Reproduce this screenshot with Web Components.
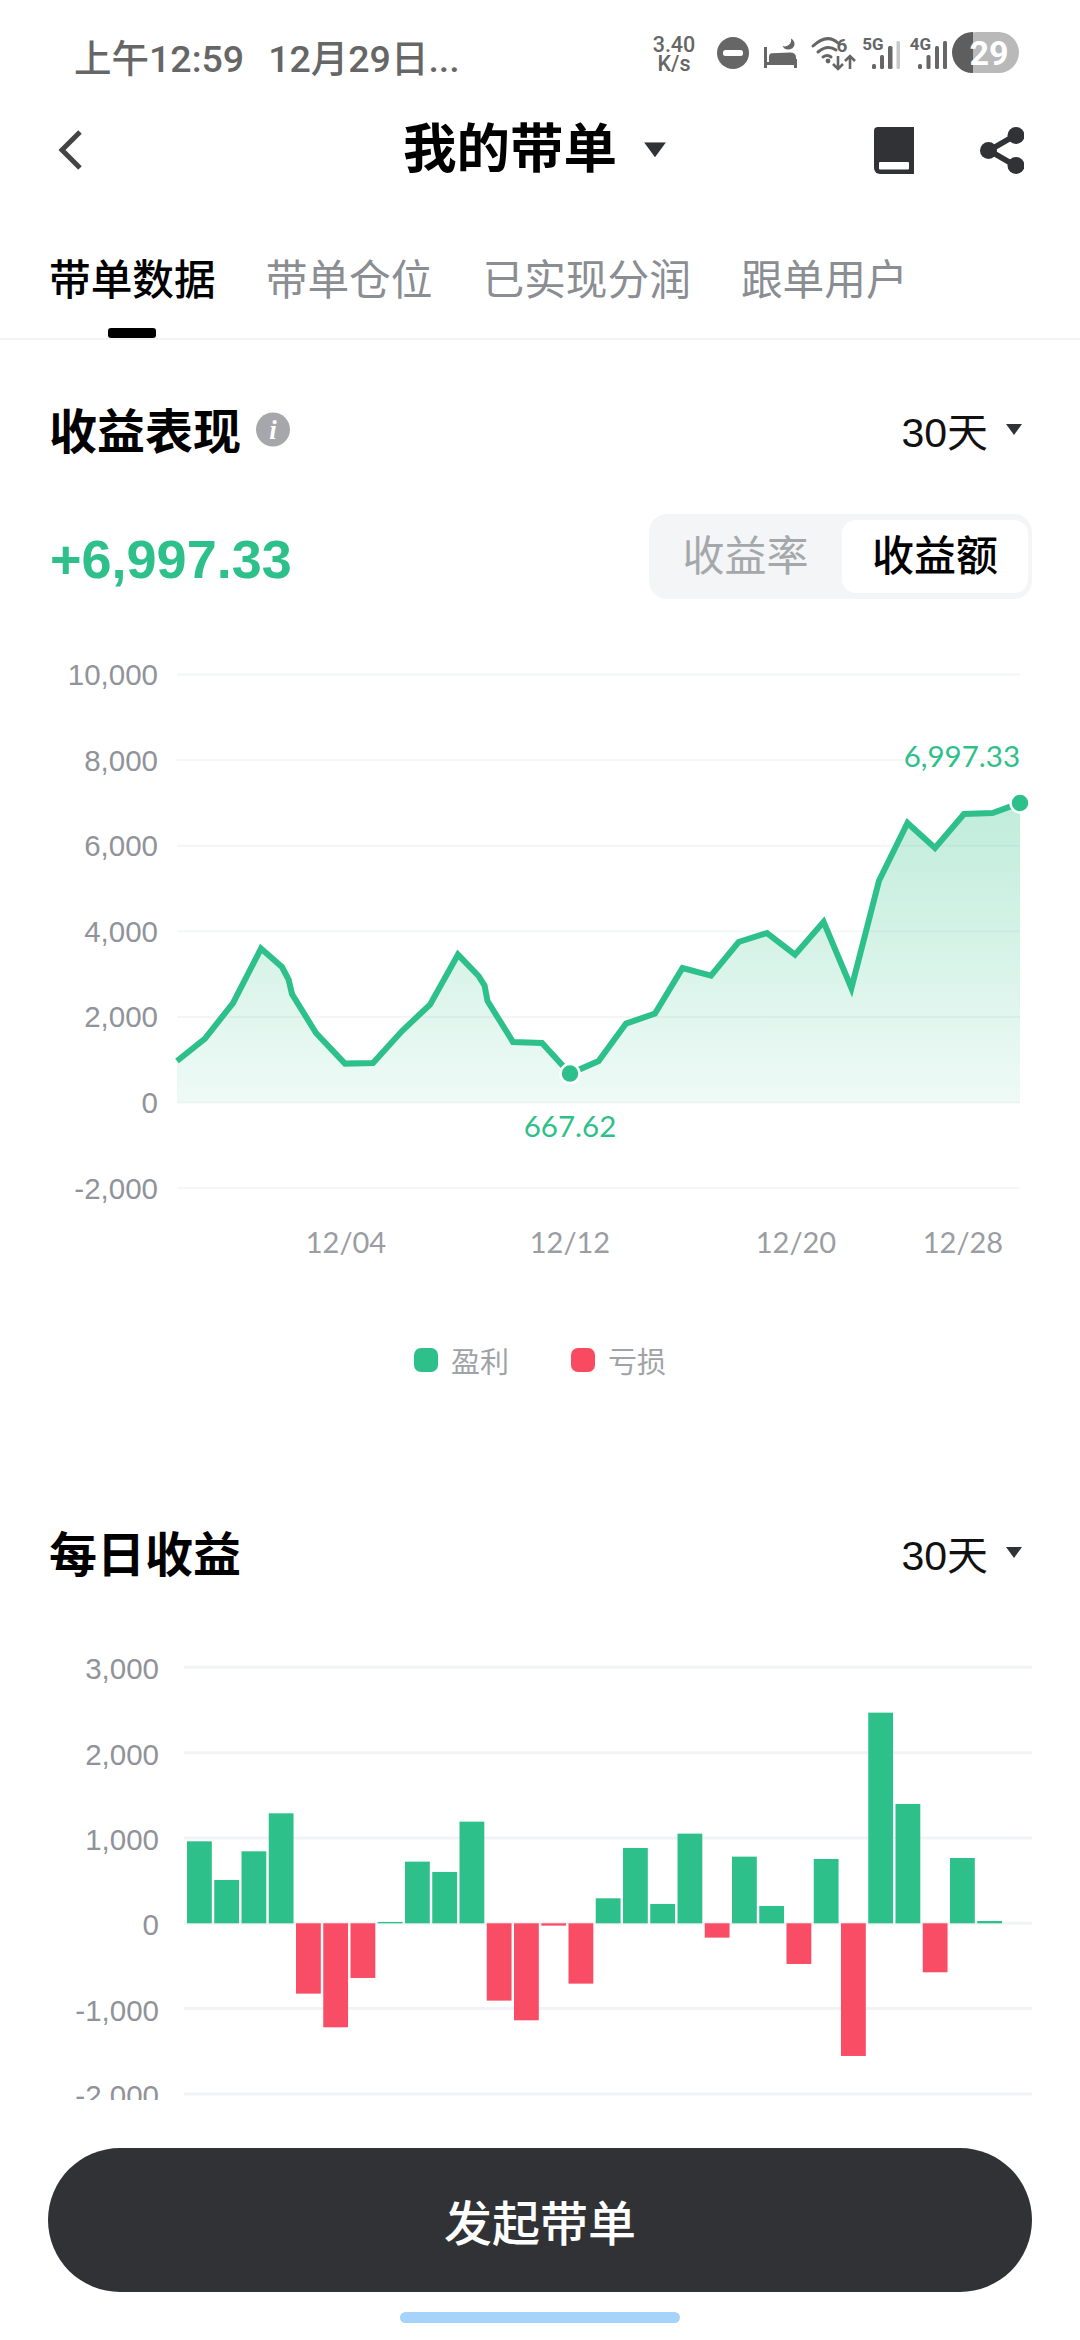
<!DOCTYPE html>
<html lang="zh-CN">
<head>
<meta charset="utf-8">
<title>我的带单</title>
<style>
html, body {
    margin: 0;
    background: #fff;
}
body {
    width: 1080px;
    height: 2340px;
    overflow: hidden;
    position: relative;
    font-family: "Liberation Sans", "Noto Sans CJK SC", sans-serif;
}
</style>
</head>
<body>
<status-bar></status-bar>
<nav-bar>我的带单</nav-bar>
<tab-strip></tab-strip>
<section-head style="--top: 58px">收益表现<info-dot slot="after"></info-dot></section-head>
<profit-summary></profit-summary>
<line-chart></line-chart>
<chart-legend></chart-legend>
<section-head style="--top: 146px">每日收益</section-head>
<bar-chart></bar-chart>
<bottom-action>发起带单</bottom-action>

<script>
const CJK = '"Liberation Sans", "Noto Sans CJK SC", sans-serif';

class Base extends HTMLElement {
    constructor(html) {
        super();
        this.attachShadow({ mode: 'open' }).innerHTML = html;
    }
}

customElements.define('status-bar', class extends Base {
    constructor() {
        super(`<style>
:host { display: flex; align-items: center; height: 110px; padding-left: 74px; box-sizing: border-box; color: #666; font-family: Roboto, "Noto Sans CJK SC", sans-serif; }
.time { font-size: 37.5px; display: flex; gap: 24px; font-weight: 500; white-space: nowrap; }
.icons { margin-left: auto; display: block; }
svg text { font-family: Roboto, sans-serif; }
</style>
<div class="time"><span>上午12:59</span><span>12月29日...</span></div>
<svg class="icons" width="440" height="110" viewBox="640 0 440 110">
    <g fill="#666" font-weight="500" text-anchor="middle">
        <text x="674" y="52" font-size="21.5">3.40</text>
        <text x="674" y="70.5" font-size="21.5">K/s</text>
    </g>
    <circle cx="733" cy="53" r="16" fill="#666"/>
    <rect x="723" y="50" width="20" height="6" rx="2.5" fill="#fff"/>
    <path d="M765.5 47v21M765 63.5h32M795.500 59v9" fill="none" stroke="#666" stroke-width="3"/>
    <path d="M769 62v-5.500q0-3 3-3.200l18-.8q6 0 6 5v4.500z" fill="#666"/>
    <path d="M791 38.500a6.500 6.500 0 0 1-8.500 7.500a6.500 6.500 0 0 0 12-1 6.500 6.500 0 0 0-3.500-6.500z" fill="#666"/>
    <g fill="none" stroke="#666" stroke-width="3" stroke-linecap="round">
        <path d="M813 46q14-13 25-3"/>
        <path d="M818 52q9.500-8 18-2"/>
        <path d="M823 57q4.500-3 8 0"/>
    </g>
    <circle cx="828" cy="61" r="2.400" fill="#666"/>
    <text x="842" y="52" font-size="19" font-weight="700" fill="#666" text-anchor="middle">6</text>
    <path d="M838 56v13M833 64l5 5 5-5M850 69v-13M845 61l5-5 5 5" fill="none" stroke="#666" stroke-width="2.600"/>
    <text x="873" y="49.500" font-size="17" font-weight="700" fill="#666" text-anchor="middle">5G</text>
    <g fill="#666">
        <rect x="872" y="64" width="4" height="5" rx="1.500"/>
        <rect x="880" y="55" width="4" height="14" rx="1.500"/>
        <rect x="888" y="46" width="4.500" height="23" rx="1.500"/>
        <rect x="896.500" y="41" width="3.500" height="28" rx="1.500" fill="#c8c8c8"/>
    </g>
    <text x="920.500" y="49.500" font-size="17" font-weight="700" fill="#666" text-anchor="middle">4G</text>
    <g fill="#666">
        <rect x="918" y="64" width="4" height="5" rx="1.500"/>
        <rect x="926.500" y="55" width="4" height="14" rx="1.500"/>
        <rect x="935" y="46" width="4" height="23" rx="1.500"/>
        <rect x="943" y="41" width="4" height="28" rx="1.500"/>
    </g>
    <rect x="956" y="32" width="63" height="41" rx="20.500" fill="#b9b9b9"/>
    <path d="M973 32h-.500a20.500 20.500 0 0 0 0 41h.500z" fill="#5e5e5e"/>
    <text x="989" y="65" font-size="34" font-weight="700" fill="#fff" text-anchor="middle">29</text>
</svg>`);
    }
});

customElements.define('nav-bar', class extends Base {
    constructor() {
        super(`<style>
:host { display: flex; align-items: center; height: 80px; position: relative; font-family: ${CJK}; }
.back { margin-left: 56px; }
.title { position: absolute; left: 403px; top: 50%; transform: translateY(-50%); display: flex; align-items: center; gap: 27px; font-size: 53.500px; font-weight: 700; color: #000; line-height: 1; white-space: nowrap; }
.right { margin-left: auto; margin-right: 56px; display: flex; gap: 66px; }
</style>
<svg class="back" width="28" height="44" viewBox="0 0 28 44"><path d="M24 4L6 22l18 18" fill="none" stroke="#444" stroke-width="5"/></svg>
<div class="title"><span><slot></slot></span>
    <svg width="22" height="15" viewBox="0 0 22 15"><path d="M0 0h22L11 15z" fill="#303236"/></svg>
</div>
<div class="right">
    <svg width="40" height="47" viewBox="0 0 40 47"><path d="M4 0h36v47H6a6 6 0 0 1-6-6V4a4 4 0 0 1 4-4z" fill="#303236"/><rect x="5" y="35" width="30" height="7.500" rx="1" fill="#fff"/></svg>
    <svg width="44" height="47" viewBox="0 0 44 47">
        <path d="M35 8.500L9 23.500l26 15" fill="none" stroke="#303236" stroke-width="5.500"/>
        <circle cx="36" cy="8.500" r="8.500" fill="#303236"/><circle cx="8.500" cy="23.500" r="8.500" fill="#303236"/><circle cx="36" cy="38.500" r="8.500" fill="#303236"/>
    </svg>
</div>`);
    }
});

customElements.define('tab-strip', class extends Base {
    constructor() {
        const tabs = ['带单数据', '带单仓位', '已实现分润', '跟单用户'];
        super(`<style>
:host { display: flex; gap: 50px; height: 150px; box-sizing: border-box; padding: 66px 0 0 49px; border-bottom: 2px solid #f3f3f4; font-family: ${CJK}; font-size: 41.700px; line-height: 50px; color: #8a8d91; }
.tab { position: relative; height: 82px; white-space: nowrap; }
.on { color: #000; font-weight: 500; }
.on::after { content: ""; position: absolute; left: 59px; bottom: 0; width: 48px; height: 10px; border-radius: 3px; background: #000; }
</style>` + tabs.map((t, i) => `<div class="tab${i ? '' : ' on'}">${t}</div>`).join(''));
    }
});

customElements.define('info-dot', class extends Base {
    constructor() {
        super(`<style>:host { display: block; }</style>
<svg width="34" height="35" viewBox="0 0 34 35" style="display:block">
    <circle cx="17" cy="17.500" r="17" fill="#a5a7aa"/>
    <text x="17" y="27" font-family="Liberation Serif, serif" font-style="italic" font-weight="700" font-size="27" fill="#fff" text-anchor="middle">i</text>
</svg>`);
    }
});

customElements.define('section-head', class extends Base {
    constructor() {
        super(`<style>
:host { display: flex; align-items: center; padding: var(--top) 58px 0 49px; height: 70px; font-family: ${CJK}; }
h2 { margin: 0; font-size: 48px; font-weight: 700; color: #000; line-height: 70px; }
.after { margin: -7px 0 0 15px; }
.range { margin-left: auto; display: flex; align-items: center; gap: 18px; font-size: 41px; color: #111; margin-top: -8px; }
</style>
<h2><slot></slot></h2>
<div class="after"><slot name="after"></slot></div>
<div class="range"><span>30天</span><svg width="16" height="11" viewBox="0 0 16 11"><path d="M0 0h16L8 11z" fill="#303236"/></svg></div>`);
    }
});

customElements.define('profit-summary', class extends Base {
    constructor() {
        super(`<style>
:host { display: flex; align-items: center; justify-content: space-between; height: 85px; margin-top: 46px; padding: 0 48px 0 50px; font-family: ${CJK}; }
.value { font-size: 54px; font-weight: 700; color: #2ec08a; padding-top: 4px; }
.seg { display: flex; box-sizing: border-box; height: 85px; width: 383px; padding: 6px 4px 6px 0; border-radius: 18px; background: #f3f5f7; font-size: 42px; line-height: 73px; text-align: center; }
.seg div { flex: 1; color: #a5a8ab; }
.seg .on { flex: 0 0 186px; color: #000; background: #fff; border-radius: 14px; font-weight: 500; }
</style>
<div class="value">+6,997.33</div>
<div class="seg"><div>收益率</div><div class="on">收益额</div></div>`);
    }
});

customElements.define('line-chart', class extends Base {
    constructor() {
        const pts = [[177,1061],[205,1038.6],[233,1003],[261,948.6],[282,967],[288.6,979.6],[292,994],[316,1033],[345,1063.6],[373,1063],
            [402,1031],[430,1004.6],[458,954.6],[478.6,976],[484.6,985.7],[487.5,1001],[513,1042],[542,1043],[570,1073.6],[598.6,1061],
            [626,1023.6],[655,1013.6],[682.5,968],[711,975.7],[738.6,942],[767,933],[795,954.6],[823.6,921.8],[851.4,988],[879,880.7],
            [907.5,823],[935,848],[964,814],[992.5,813],[1020,803]];
        const line = pts.map(p => p.join(',')).join(' ');
        const ticks = ['10,000', '8,000', '6,000', '4,000', '2,000', '0', '-2,000'];
        const grid = ticks.map((t, i) => {
            const y = 674.5 + i * 85.62;
            return `<line x1="177" x2="1020" y1="${y}" y2="${y}" stroke="#f4f5f6" stroke-width="1.800"/>
                <text class="y" x="158" y="${y + 10.5}" text-anchor="end">${t}</text>`;
        }).join('');
        const dates = [[346, '12/04'], [570, '12/12'], [796, '12/20'], [963, '12/28']];
        super(`<style>
:host { display: block; height: 660px; margin-top: 41px; }
svg { display: block; }
text { font-family: "Liberation Sans", sans-serif; font-size: 29.500px; }
.y { fill: #909399; }
.x { fill: #9a9da1; font-family: Lato, sans-serif; font-size: 29px; }
.mark { fill: #2ec08a; font-family: Lato, sans-serif; }
</style>
<svg width="1080" height="660" viewBox="0 640 1080 660">
    <defs><linearGradient id="area" gradientUnits="userSpaceOnUse" x1="0" y1="803" x2="0" y2="1102">
        <stop offset="0" stop-color="#2ec08a" stop-opacity=".3"/><stop offset="1" stop-color="#2ec08a" stop-opacity=".08"/>
    </linearGradient></defs>
    ${grid}
    <polygon points="177,1102.6 ${line} 1020,1102.6" fill="url(#area)"/>
    <polyline points="${line}" fill="none" stroke="#2ec08a" stroke-width="6"/>
    <circle cx="570" cy="1073.6" r="9.500" fill="#2ec08a" stroke="#fff" stroke-width="2.500"/>
    <circle cx="1020" cy="803" r="9.500" fill="#2ec08a" stroke="#fff" stroke-width="2.500"/>
    <text class="mark" x="570" y="1136.500" text-anchor="middle">667.62</text>
    <text class="mark" x="1020" y="766.500" text-anchor="end">6,997.33</text>
    ${dates.map(d => `<text class="x" x="${d[0]}" y="1253" text-anchor="middle">${d[1]}</text>`).join('')}
</svg>`);
    }
});

customElements.define('chart-legend', class extends Base {
    constructor() {
        super(`<style>
:host { display: flex; height: 30px; margin-top: 45px; padding-left: 414px; align-items: center; font-family: ${CJK}; font-size: 29px; color: #a0a3a6; }
i { width: 24px; height: 24px; border-radius: 7px; margin-right: 13px; }
span { margin-right: 62px; }
</style>
<i style="background:#2ec08a"></i><span>盈利</span>
<i style="background:#f94a62"></i><span>亏损</span>`);
    }
});

customElements.define('bar-chart', class extends Base {
    constructor() {
        // values are pixels (at 3x) from the zero line, up is positive
        const bars = [246,130,216,330,-211,-312,-164,4,185,154,305,-232,-291,-7,-181,75,226,58,269,-43,200,52,-122,193,-398,632,358,-147,196,7];
        const zero = 1923.3;
        const ticks = ['3,000', '2,000', '1,000', '0', '-1,000', '-2,000'];
        const grid = ticks.map((t, i) => {
            const y = 1667.3 + i * 85.33;
            return `<line x1="184" x2="1032" y1="${y}" y2="${y}" stroke="#f2f3f6" stroke-width="3"/>
                <text x="159" y="${y + 12}" text-anchor="end">${t}</text>`;
        }).join('');
        const rects = bars.map((v, i) => {
            const h = Math.abs(v) / 3;
            const y = v > 0 ? zero - h : zero;
            const x = 187 + i * 27.25;
            return `<rect x="${x}" y="${y}" width="24.800" height="${h}" fill="${v > 0 ? '#2ec08a' : '#f94d65'}"/>`;
        }).join('');
        super(`<style>
:host { display: block; height: 460px; margin-top: 49px; }
svg { display: block; }
text { font-family: "Liberation Sans", sans-serif; font-size: 29.500px; fill: #909399; }
</style>
<svg width="1080" height="460" viewBox="0 1640 1080 460">${grid}${rects}</svg>`);
    }
});

customElements.define('bottom-action', class extends Base {
    constructor() {
        super(`<style>
:host { position: absolute; left: 0; right: 0; bottom: 0; height: 240px; display: flex; flex-direction: column; align-items: center; padding-top: 48px; box-sizing: border-box; background: #fff; font-family: ${CJK}; }
button { width: 984px; height: 144px; border: 0; border-radius: 72px; background: #303236; color: #fff; font: 500 48px ${CJK}; padding: 0; }
.home { width: 280px; height: 11px; margin-top: 20px; border-radius: 6px; background: #a6d3fa; }
</style>
<button><slot></slot></button>
<div class="home"></div>`);
    }
});
</script>
</body>
</html>
